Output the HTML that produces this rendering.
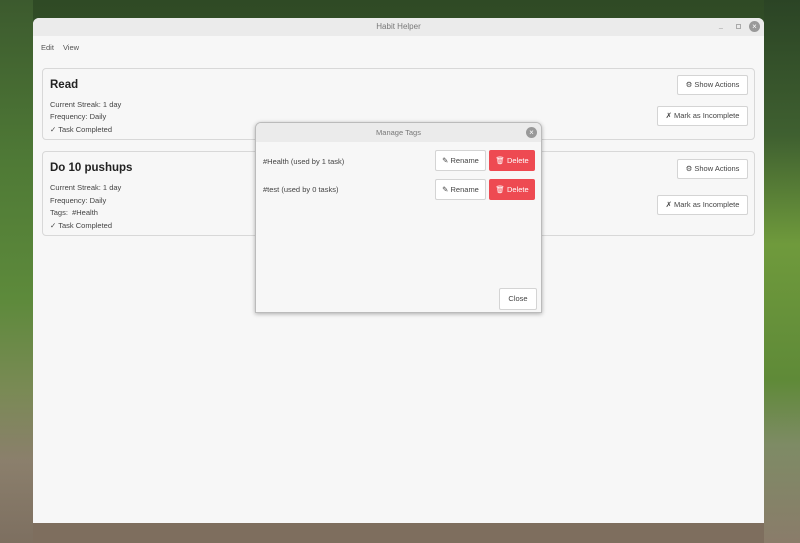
<!DOCTYPE html>
<html><head><style>
*{box-sizing:border-box;margin:0;padding:0}
body{width:800px;height:543px;overflow:hidden;position:relative;font-family:"Liberation Sans",sans-serif;
background:linear-gradient(180deg,#2f4a25 0%,#3d5d2c 40%,#4e7033 65%,#7a7560 80%,#8f8170 100%);}
.bgl{position:absolute;left:0;top:0;width:33px;height:543px;background:linear-gradient(180deg,#3c5a2e 0%,#4f7a36 30%,#5d8a3b 55%,#7a8a55 72%,#8b7f6c 85%,#7d6f60 100%)}
.bgr{position:absolute;left:764px;top:0;width:36px;height:543px;background:linear-gradient(180deg,#2b4425 0%,#3f6030 25%,#6f9a3c 45%,#5f8a38 70%,#7e8b65 82%,#8a7c6a 100%)}
.bgb{position:absolute;left:33px;top:523px;width:731px;height:20px;background:#7e6e5e}
.win{position:absolute;left:33px;top:18px;width:731px;height:505px;background:#f7f7f7;border-radius:6px 6px 0 0;overflow:hidden}
.tb{height:18px;background:#ebebeb;text-align:center;font-size:8px;color:#777;line-height:18px}
.menu{position:absolute;top:25px;left:8px;font-size:7.5px;color:#555}
.menu span{margin-right:9px}
.card{position:absolute;left:9px;width:713px;border:1px solid #d8d8d8;border-radius:4px;background:#f7f7f7}
.card h2{position:absolute;left:7px;font-size:11.5px;font-weight:bold;color:#222}
.card p{position:absolute;left:7px;font-size:7.5px;color:#444}
.btn{position:absolute;background:#fff;border:1px solid #d4d4d4;border-radius:2px;font-size:7.5px;color:#444;text-align:center}
.dlg{position:absolute;left:255px;top:122px;width:287px;height:191px;background:#f7f7f7;border:1px solid #bbb;border-radius:6px 6px 0 0;box-shadow:0 1px 4px rgba(0,0,0,.3);overflow:hidden}
.dtb{height:19px;background:#ebebeb;text-align:center;font-size:7.5px;color:#777;line-height:19px}
.x{position:absolute;width:11px;height:11px;border-radius:50%;background:#999;color:#fff;font-size:8px;line-height:11px;text-align:center}
.del{position:absolute;background:#ee4a52;border-radius:2px;color:#fff;font-size:7.5px;text-align:center}
.row{position:absolute;left:7px;font-size:7.5px;color:#444}
</style></head><body>
<div class="bgl"></div><div class="bgr"></div><div class="bgb"></div>
<div class="win">
<div class="tb">Habit Helper</div>
<div style="position:absolute;left:686px;top:4px;font-size:7px;color:#999">_</div>
<div style="position:absolute;left:703px;top:6px;width:5px;height:5px;border:1px solid #aaa"></div>
<div class="x" style="left:716px;top:3px">×</div>
<div class="menu"><span>Edit</span><span>View</span></div>
<div class="card" style="top:50px;height:72px">
<h2 style="top:10px">Read</h2>
<p style="top:31px">Current Streak: 1 day</p>
<p style="top:43px">Frequency: Daily</p>
<p style="top:56px">✓ Task Completed</p>
<div class="btn" style="left:634px;top:6px;width:71px;height:20px;line-height:18px">⚙ Show Actions</div>
<div class="btn" style="left:614px;top:37px;width:91px;height:20px;line-height:18px">✗ Mark as Incomplete</div>
</div>
<div class="card" style="top:133px;height:85px">
<h2 style="top:10px">Do 10 pushups</h2>
<p style="top:31px">Current Streak: 1 day</p>
<p style="top:44px">Frequency: Daily</p>
<p style="top:56px">Tags:&nbsp; #Health</p>
<p style="top:69px">✓ Task Completed</p>
<div class="btn" style="left:634px;top:7px;width:71px;height:20px;line-height:18px">⚙ Show Actions</div>
<div class="btn" style="left:614px;top:43px;width:91px;height:20px;line-height:18px">✗ Mark as Incomplete</div>
</div>
</div>
<div class="dlg">
<div class="dtb">Manage Tags</div>
<div class="x" style="left:270px;top:4px">×</div>
<div class="row" style="top:34px">#Health (used by 1 task)</div>
<div class="row" style="top:62px">#test (used by 0 tasks)</div>
<div class="btn" style="left:179px;top:27px;width:51px;height:21px;line-height:19px">✎ Rename</div>
<div class="del" style="left:233px;top:27px;width:46px;height:21px;line-height:21px">🗑 Delete</div>
<div class="btn" style="left:179px;top:56px;width:51px;height:21px;line-height:19px">✎ Rename</div>
<div class="del" style="left:233px;top:56px;width:46px;height:21px;line-height:21px">🗑 Delete</div>
<div class="btn" style="left:243px;top:165px;width:38px;height:22px;line-height:20px">Close</div>
</div>
</body></html>
